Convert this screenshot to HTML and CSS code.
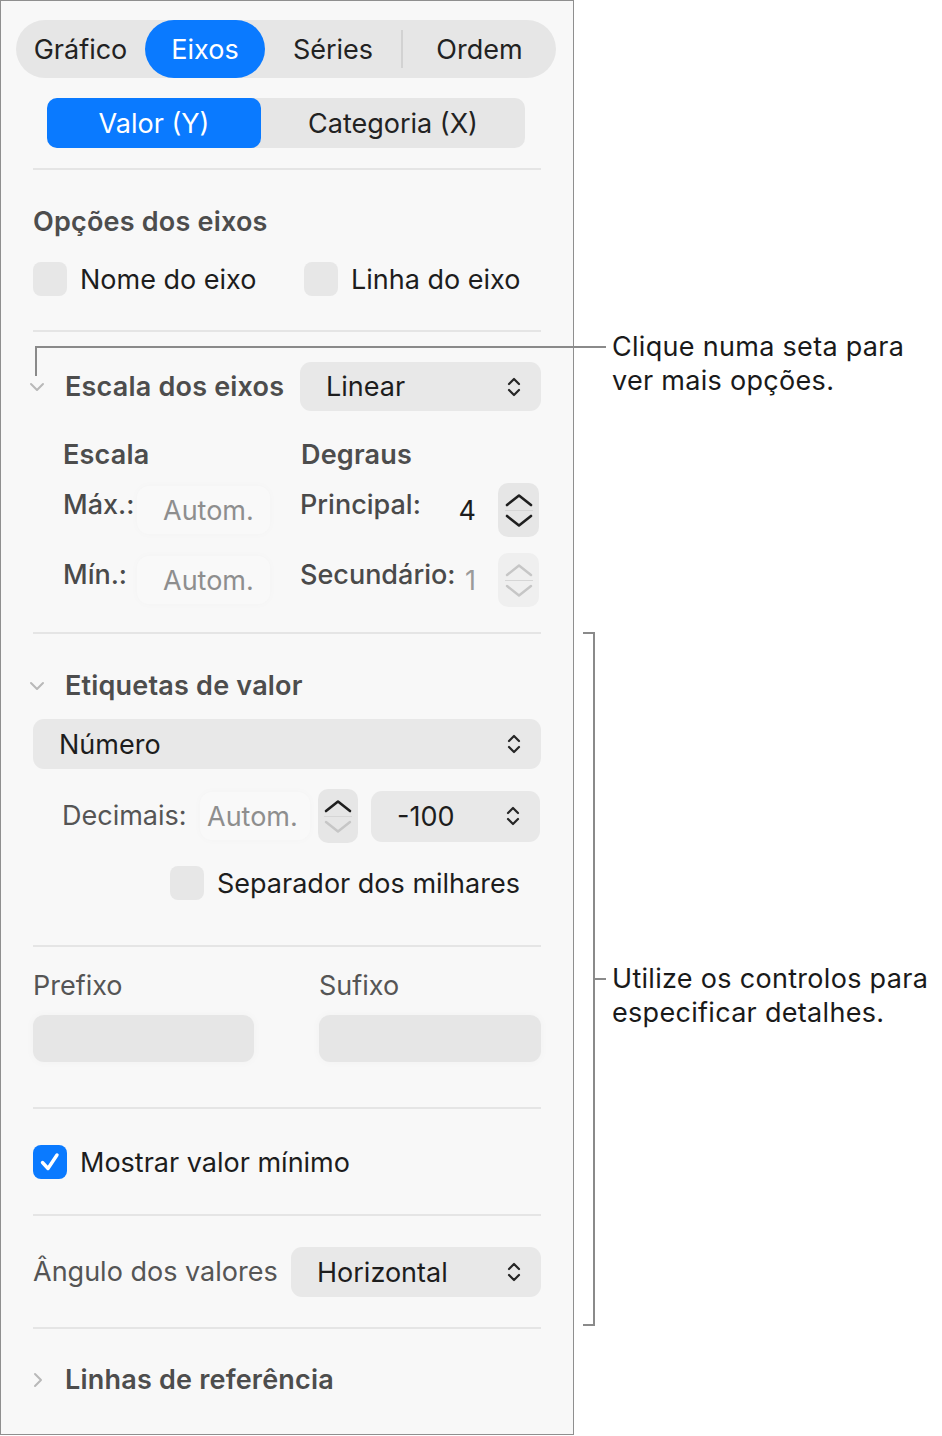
FILE: index.html
```html
<!DOCTYPE html>
<html lang="pt">
<head>
  <meta charset="UTF-8">
  <title>Eixos</title>
  <link rel="stylesheet" href="styles.css">
</head>
<body>

  <div class="pagina">
    <div class="painel">

      <div class="abas">
        <span class="aba aba-grafico">Gráfico</span>
        <span class="aba aba-eixos ativa">Eixos</span>
        <span class="aba aba-series">Séries</span>
        <span class="aba-sep"></span>
        <span class="aba aba-ordem">Ordem</span>
      </div>

      <div class="segmento">
        <span class="seg seg-valor ativo">Valor (Y)</span>
        <span class="seg seg-cat">Categoria (X)</span>
      </div>

      <div class="divisor div-topo"></div>

      <!-- Opções dos eixos -->
      <div class="secao sec-opcoes">
        <div class="titulo">Opções dos eixos</div>
        <div class="linha-check">
          <label class="check check-nome"><span class="caixa-check"></span>Nome do eixo</label>
          <label class="check"><span class="caixa-check"></span>Linha do eixo</label>
        </div>
      </div>
      <div class="divisor"></div>

      <!-- Escala dos eixos -->
      <div class="secao sec-escala">
        <div class="cabecalho">
          <span class="seta">
            <svg width="16" height="10" viewBox="0 0 16 10"><path d="M2 2 L8 8 L14 2" fill="none" stroke="#b9b9b9" stroke-width="2" stroke-linecap="round" stroke-linejoin="round"/></svg>
          </span>
          <span class="titulo">Escala dos eixos</span>
          <div class="popup popup-linear">
            <span>Linear</span>
            <svg class="ic-popup" width="16" height="22" viewBox="0 0 16 22"><path d="M3 8 L8 3 L13 8 M3 14 L8 19 L13 14" fill="none" stroke="#262626" stroke-width="2.2" stroke-linecap="round" stroke-linejoin="round"/></svg>
          </div>
        </div>

        <div class="grade-titulos">
          <span class="titulo col-esq">Escala</span>
          <span class="titulo">Degraus</span>
        </div>

        <div class="grade-linha">
          <span class="rotulo-forte col-rot">Máx.:</span>
          <span class="campo-claro">Autom.</span>
          <span class="rotulo-forte col-rot2">Principal:</span>
          <span class="valor">4</span>
          <div class="passo">
            <svg width="30" height="14" viewBox="0 0 30 14"><path d="M3 12 L15 2.5 L27 12" fill="none" stroke="#1f1f1f" stroke-width="2.6" stroke-linecap="round" stroke-linejoin="round"/></svg>
            <span class="passo-sep"></span>
            <svg width="30" height="14" viewBox="0 0 30 14"><path d="M3 2 L15 11.5 L27 2" fill="none" stroke="#1f1f1f" stroke-width="2.6" stroke-linecap="round" stroke-linejoin="round"/></svg>
          </div>
        </div>

        <div class="grade-linha linha-min">
          <span class="rotulo-forte col-rot">Mín.:</span>
          <span class="campo-claro">Autom.</span>
          <span class="rotulo-forte col-rot2">Secundário:</span>
          <span class="valor valor-cinza">1</span>
          <div class="passo passo-off">
            <svg width="30" height="14" viewBox="0 0 30 14"><path d="M3 12 L15 2.5 L27 12" fill="none" stroke="#c6c6c6" stroke-width="2.4" stroke-linecap="round" stroke-linejoin="round"/></svg>
            <span class="passo-sep"></span>
            <svg width="30" height="14" viewBox="0 0 30 14"><path d="M3 2 L15 11.5 L27 2" fill="none" stroke="#c6c6c6" stroke-width="2.4" stroke-linecap="round" stroke-linejoin="round"/></svg>
          </div>
        </div>
      </div>
      <div class="divisor"></div>

      <!-- Etiquetas de valor -->
      <div class="secao sec-etiquetas">
        <div class="cabecalho">
          <span class="seta">
            <svg width="16" height="10" viewBox="0 0 16 10"><path d="M2 2 L8 8 L14 2" fill="none" stroke="#b9b9b9" stroke-width="2" stroke-linecap="round" stroke-linejoin="round"/></svg>
          </span>
          <span class="titulo">Etiquetas de valor</span>
        </div>

        <div class="popup popup-numero">
          <span>Número</span>
          <svg class="ic-popup" width="16" height="22" viewBox="0 0 16 22"><path d="M3 8 L8 3 L13 8 M3 14 L8 19 L13 14" fill="none" stroke="#262626" stroke-width="2.2" stroke-linecap="round" stroke-linejoin="round"/></svg>
        </div>

        <div class="linha-decimais">
          <span class="rotulo rot-dec">Decimais:</span>
          <span class="campo-claro campo-dec">Autom.</span>
          <div class="passo passo-dec">
            <svg width="30" height="14" viewBox="0 0 30 14"><path d="M3 12 L15 2.5 L27 12" fill="none" stroke="#1f1f1f" stroke-width="2.6" stroke-linecap="round" stroke-linejoin="round"/></svg>
            <span class="passo-sep"></span>
            <svg width="30" height="14" viewBox="0 0 30 14"><path d="M3 2 L15 11.5 L27 2" fill="none" stroke="#c6c6c6" stroke-width="2.4" stroke-linecap="round" stroke-linejoin="round"/></svg>
          </div>
          <div class="popup popup-cem">
            <span>-100</span>
            <svg class="ic-popup" width="16" height="22" viewBox="0 0 16 22"><path d="M3 8 L8 3 L13 8 M3 14 L8 19 L13 14" fill="none" stroke="#262626" stroke-width="2.2" stroke-linecap="round" stroke-linejoin="round"/></svg>
          </div>
        </div>

        <label class="check check-milhares"><span class="caixa-check"></span>Separador dos milhares</label>
      </div>
      <div class="divisor"></div>

      <!-- Prefixo / Sufixo -->
      <div class="secao sec-prefixo">
        <div class="duas-col">
          <div class="col">
            <div class="rotulo">Prefixo</div>
            <div class="campo"></div>
          </div>
          <div class="col">
            <div class="rotulo">Sufixo</div>
            <div class="campo"></div>
          </div>
        </div>
      </div>
      <div class="divisor"></div>

      <!-- Mostrar valor mínimo -->
      <div class="secao sec-mostrar">
        <label class="check">
          <span class="caixa-check marcado">
            <svg width="24" height="22" viewBox="0 0 24 22"><path d="M4.5 11.5 L10 17.5 L19 4" fill="none" stroke="#fff" stroke-width="3.4" stroke-linecap="round" stroke-linejoin="round"/></svg>
          </span>
          Mostrar valor mínimo
        </label>
      </div>
      <div class="divisor"></div>

      <!-- Ângulo -->
      <div class="secao sec-angulo">
        <span class="rotulo">Ângulo dos valores</span>
        <div class="popup popup-horiz">
          <span>Horizontal</span>
          <svg class="ic-popup" width="16" height="22" viewBox="0 0 16 22"><path d="M3 8 L8 3 L13 8 M3 14 L8 19 L13 14" fill="none" stroke="#262626" stroke-width="2.2" stroke-linecap="round" stroke-linejoin="round"/></svg>
        </div>
      </div>
      <div class="divisor"></div>

      <!-- Linhas de referência -->
      <div class="secao sec-linhas">
        <div class="cabecalho">
          <span class="seta seta-dir">
            <svg width="10" height="16" viewBox="0 0 10 16"><path d="M2 2 L8 8 L2 14" fill="none" stroke="#b9b9b9" stroke-width="2" stroke-linecap="round" stroke-linejoin="round"/></svg>
          </span>
          <span class="titulo">Linhas de referência</span>
        </div>
      </div>
    </div>

    <!-- Chamadas -->
    <div class="ch-linha ch1-h"></div>
    <div class="ch-linha ch1-v"></div>
    <div class="ch-texto ch1-texto">Clique numa seta para<br>ver mais opções.</div>

    <div class="ch-linha ch2-v"></div>
    <div class="ch-linha ch2-cima"></div>
    <div class="ch-linha ch2-baixo"></div>
    <div class="ch-linha ch2-meio"></div>
    <div class="ch-texto ch2-texto">Utilize os controlos para<br>especificar detalhes.</div>
  </div>

</body>
</html>
```

FILE: styles.css
```css
* {
  box-sizing: border-box;
}
body {
  margin: 0;
  background: #fff;
  font-family: Inter, "Noto Sans", sans-serif;
  color: #1d1d1d;
}
.pagina {
  position: relative;
  width: 942px;
  height: 1436px;
}
.painel {
  width: 574px;
  height: 1435px;
  background: #f8f8f8;
  border: 1px solid #8f8f8f;
  padding-top: 19px;
}

/* abas de cima */
.abas {
  display: flex;
  align-items: center;
  height: 58px;
  width: 540px;
  margin-left: 15px;
  background: #e6e6e6;
  border-radius: 29px;
}
.aba {
  height: 58px;
  display: flex;
  align-items: center;
  justify-content: center;
  font-size: 27px;
  color: #222;
}
.aba-grafico { width: 129px; }
.aba-eixos { width: 120px; }
.aba-series { width: 136px; }
.aba-ordem { width: 153px; }
.aba.ativa {
  background: #0a7aff;
  color: #fff;
  border-radius: 29px;
}
.aba-sep {
  width: 2px;
  height: 38px;
  background: #d2d2d2;
}

.segmento {
  display: flex;
  width: 478px;
  height: 50px;
  margin: 20px 0 0 46px;
  background: #e6e6e6;
  border-radius: 10px;
}
.seg {
  display: flex;
  align-items: center;
  justify-content: center;
  font-size: 27px;
  color: #222;
}
.seg-valor { width: 214px; }
.seg-cat { width: 264px; }
.seg.ativo {
  background: #0a7aff;
  color: #fff;
  border-radius: 10px;
}

.divisor {
  height: 2px;
  margin: 0 32px;
  background: #e5e5e5;
}
.div-topo {
  margin-top: 20px;
}
.secao {
  margin: 0 32px;
}

.titulo {
  font-size: 27px;
  line-height: 32px;
  font-weight: 600;
  letter-spacing: 0.2px;
  color: #4d4d4d;
  white-space: nowrap;
}
.rotulo {
  font-size: 27px;
  line-height: 32px;
  color: #555;
  white-space: nowrap;
}
.rotulo-forte {
  font-size: 27px;
  line-height: 32px;
  font-weight: 500;
  color: #4a4a4a;
  white-space: nowrap;
}

/* checkboxes */
.check {
  display: flex;
  align-items: center;
  font-size: 27px;
  color: #1d1d1d;
  height: 34px;
  white-space: nowrap;
}
.caixa-check {
  width: 34px;
  height: 34px;
  border-radius: 8px;
  background: #e7e7e7;
  margin-right: 13px;
  display: flex;
  align-items: center;
  justify-content: center;
}
.caixa-check.marcado {
  background: #0a7aff;
}

.sec-opcoes {
  padding: 36px 0 34px;
}
.linha-check {
  display: flex;
  margin-top: 24px;
}
.check-nome {
  width: 271px;
}

/* popups */
.popup {
  display: flex;
  align-items: center;
  justify-content: space-between;
  background: #e8e8e8;
  border-radius: 11px;
  font-size: 27px;
  color: #1d1d1d;
  padding: 0 19px 0 26px;
}
.popup-linear {
  width: 241px;
  height: 49px;
  margin-left: auto;
}
.popup-numero {
  height: 50px;
  margin-top: 17px;
}
.popup-cem {
  width: 169px;
  height: 51px;
  margin-left: 13px;
}
.popup-horiz {
  width: 250px;
  height: 50px;
  margin-left: auto;
}

/* escala */
.sec-escala {
  padding: 30px 0 25px;
}
.cabecalho {
  display: flex;
  align-items: center;
}
.seta {
  width: 32px;
  margin-left: -10px;
  padding-left: 6px;
  margin-right: 10px;
  display: flex;
  align-items: center;
}
.seta-dir {
  padding-left: 10px;
}
.grade-titulos {
  display: flex;
  margin-top: 28px;
  padding-left: 30px;
}
.col-esq {
  width: 238px;
}
.grade-linha {
  display: flex;
  align-items: center;
  height: 54px;
  margin-top: 12px;
  padding-left: 30px;
}
.linha-min {
  margin-top: 16px;
}
.col-rot {
  width: 74px;
  padding-bottom: 10px;
}
.col-rot2 {
  width: 150px;
  padding-bottom: 10px;
}
.campo-claro {
  width: 133px;
  height: 48px;
  display: flex;
  align-items: center;
  padding-left: 26px;
  font-size: 27px;
  color: #8e8e8e;
  background: #f9f9f9;
  border-radius: 12px;
  box-shadow: 0 0 8px rgba(0, 0, 0, 0.025);
  margin-right: 30px;
}
.valor {
  width: 40px;
  height: 48px;
  display: flex;
  align-items: center;
  justify-content: flex-end;
  padding-right: 14px;
  font-size: 27px;
  color: #1d1d1d;
  margin-right: 8px;
}
.valor-cinza {
  color: #9a9a9a;
}
.passo {
  width: 41px;
  height: 54px;
  background: #e6e6e6;
  border-radius: 10px;
  display: flex;
  flex-direction: column;
  align-items: center;
  justify-content: center;
}
.passo-off {
  background: #efefef;
}
.passo-sep {
  width: 28px;
  height: 1px;
  background: #d6d6d6;
  margin: 3px 0;
}

/* etiquetas */
.sec-etiquetas {
  padding: 36px 0 45px;
}
.linha-decimais {
  display: flex;
  align-items: center;
  height: 54px;
  margin-top: 20px;
  padding-left: 29px;
}
.rot-dec {
  width: 138px;
}
.campo-dec {
  width: 110px;
  padding-left: 7px;
  margin-right: 8px;
}
.passo-dec {
  width: 40px;
}
.check-milhares {
  margin: 23px 0 0 137px;
}

/* prefixo */
.sec-prefixo {
  padding: 23px 0 45px;
}
.duas-col {
  display: flex;
  justify-content: space-between;
}
.col {
  width: 222px;
}
.col:first-child {
  width: 221px;
}
.campo {
  height: 47px;
  margin-top: 13px;
  background: #e6e6e6;
  border-radius: 11px;
  box-shadow: 0 0 10px rgba(0, 0, 0, 0.03);
}

.sec-mostrar {
  padding: 36px 0 35px;
}
.sec-angulo {
  display: flex;
  align-items: center;
  padding: 31px 0 30px;
}
.sec-linhas {
  padding-top: 35px;
}

/* chamadas */
.ch-linha {
  position: absolute;
  background: #8a8a8a;
}
.ch1-h {
  left: 35px;
  top: 346px;
  width: 571px;
  height: 2px;
}
.ch1-v {
  left: 35px;
  top: 346px;
  width: 2px;
  height: 30px;
}
.ch2-v {
  left: 593px;
  top: 632px;
  width: 2px;
  height: 694px;
}
.ch2-cima {
  left: 583px;
  top: 632px;
  width: 12px;
  height: 2px;
}
.ch2-baixo {
  left: 583px;
  top: 1324px;
  width: 12px;
  height: 2px;
}
.ch2-meio {
  left: 595px;
  top: 978px;
  width: 11px;
  height: 2px;
}
.ch-texto {
  position: absolute;
  left: 612px;
  font-size: 27px;
  line-height: 34px;
  color: #1a1a1a;
  letter-spacing: 0.3px;
  white-space: nowrap;
}
.ch1-texto {
  top: 330px;
}
.ch2-texto {
  top: 962px;
}
```
